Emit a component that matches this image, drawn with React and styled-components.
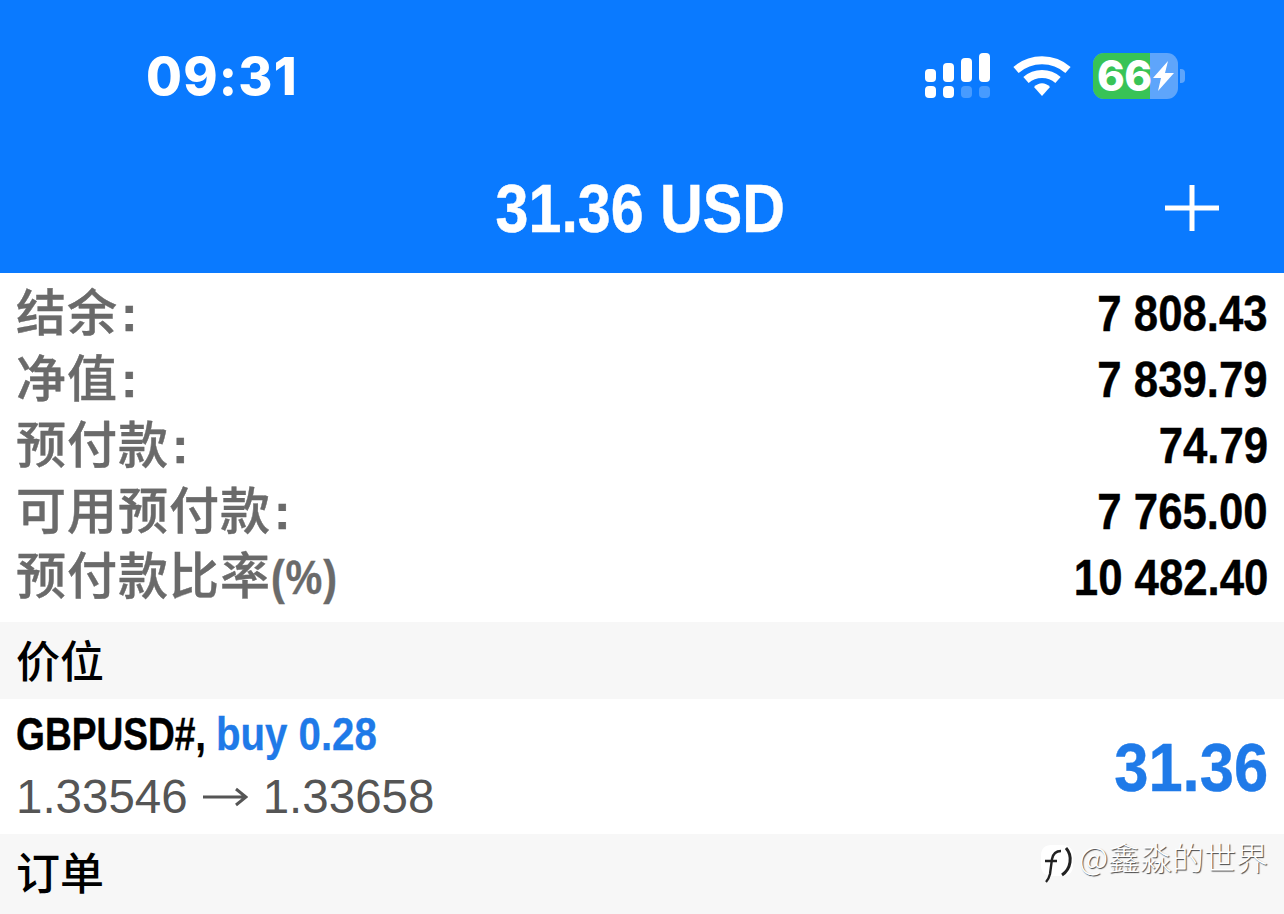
import React from 'react';
import styled, { createGlobalStyle } from 'styled-components';

const Global = createGlobalStyle`
    html, body {
        margin: 0;
        padding: 0;
        background: #fff;
    }
    body {
        font-family: "Liberation Sans", "Noto Sans CJK SC", sans-serif;
    }
`;

const Page = styled.div`
    position: relative;
    width: 1284px;
    height: 914px;
    overflow: hidden;
    display: flex;
    flex-direction: column;
`;

const Header = styled.header`
    height: 273px;
    flex: none;
    background: #0a7aff;
    color: #fff;
    display: flex;
    flex-direction: column;
`;

const StatusBar = styled.div`
    height: 150px;
    padding: 2px 99px 0 146px;
    box-sizing: border-box;
    display: flex;
    align-items: center;
    justify-content: space-between;
`;

const Clock = styled.div`
    font-family: Inter, "Liberation Sans", sans-serif;
    font-size: 52px;
    font-weight: 800;
    letter-spacing: 1.2px;
`;

const StatusIcons = styled.div`
    display: flex;
    align-items: center;
    gap: 22px;
`;

const BatteryWrap = styled.div`
    display: flex;
    align-items: center;
    gap: 2px;
`;

const Battery = styled.div`
    position: relative;
    width: 85px;
    height: 46px;
    border-radius: 11px;
    background: #5ea5fb;
    display: flex;
    align-items: center;
    padding-left: 4px;
    box-sizing: border-box;
    font-family: Inter, sans-serif;
    font-size: 42px;
    line-height: 46px;
    font-weight: 800;
`;

const BatteryFill = styled.div`
    position: absolute;
    left: 0;
    top: 0;
    bottom: 0;
    border-radius: 11px 0 0 11px;
    background: #38c356;
`;

const BatteryText = styled.span`
    position: relative;
    letter-spacing: -0.5px;
`;

const BatteryBolt = styled.svg`
    position: relative;
    flex: none;
    margin-left: 1px;
`;

const BatteryCap = styled.div`
    width: 5px;
    height: 14px;
    border-radius: 0 4px 4px 0;
    background: #5ea5fb;
`;

const TitleRow = styled.div`
    position: relative;
    height: 116px;
    display: flex;
    align-items: center;
    justify-content: center;
`;

const Title = styled.div`
    font-size: 68px;
    font-weight: 700;
    transform: scaleX(0.87);
    white-space: nowrap;
    -webkit-text-stroke: 0.5px #fff;
    margin-right: 4px;
`;

const PlusIcon = styled.svg`
    position: absolute;
    right: 65px;
    top: 35px;
`;

const Summary = styled.div`
    height: 349px;
    flex: none;
    padding-top: 8px;
    box-sizing: border-box;
`;

const SummaryRow = styled.div`
    height: 66px;
    padding: 0 16px;
    display: flex;
    align-items: center;
    justify-content: space-between;
`;

const Label = styled.span`
    font-family: "Noto Sans CJK SC", sans-serif;
    font-size: 50px;
    line-height: 60px;
    font-weight: 500;
    color: #6a6a6a;
    letter-spacing: 1px;
    margin-top: -6px;
    -webkit-text-stroke: 0.4px #6a6a6a;
`;

const Colon = styled.span`
    font-family: "Liberation Sans", sans-serif;
    font-weight: 700;
    margin-left: 3px;
`;

const Percent = styled.span`
    display: inline-block;
    font-family: "Liberation Sans", sans-serif;
    font-size: 48px;
    font-weight: 700;
    transform: scaleX(0.86);
    transform-origin: left center;
    margin-right: -10px;
`;

const Value = styled.span`
    font-size: 50px;
    font-weight: 700;
    color: #000;
    display: inline-block;
    transform: scaleX(0.875);
    transform-origin: right center;
    white-space: nowrap;
    -webkit-text-stroke: 0.4px #000;
`;

const SectionHead = styled.div`
    height: ${(p) => p.$h}px;
    flex: none;
    padding: 0 16px ${(p) => p.$pad}px;
    box-sizing: border-box;
    background: #f7f7f7;
    color: #000;
    display: flex;
    align-items: center;
    font-family: "Noto Sans CJK SC", sans-serif;
    font-size: 44px;
    font-weight: 500;
`;

const Position = styled.div`
    height: 135px;
    flex: none;
    padding: 0 16px;
    box-sizing: border-box;
    display: flex;
    align-items: center;
    justify-content: space-between;
`;

const PositionInfo = styled.div`
    display: flex;
    flex-direction: column;
    gap: 4px;
    margin-top: -4px;
`;

const SymbolLine = styled.div`
    display: flex;
    line-height: 60px;
    font-size: 47px;
    font-weight: 700;
    white-space: nowrap;
`;

const Symbol = styled.span`
    display: inline-block;
    width: 200px;
    color: #000;
    transform: scaleX(0.79);
    transform-origin: left center;
    -webkit-text-stroke: 0.4px #000;
`;

const Side = styled.span`
    display: inline-block;
    color: #1f7ae8;
    transform: scaleX(0.855);
    transform-origin: left center;
    -webkit-text-stroke: 0.3px #1f7ae8;
`;

const Prices = styled.div`
    display: flex;
    align-items: center;
    font-size: 47.5px;
    color: #555;
    line-height: 58px;
    white-space: nowrap;
`;

const Arrow = styled.svg`
    margin: 0 15px 0 14px;
`;

const Profit = styled.div`
    font-size: 68px;
    font-weight: 700;
    color: #1f7ae8;
    transform: scaleX(0.905);
    transform-origin: right center;
    -webkit-text-stroke: 0.4px #1f7ae8;
`;

const Watermark = styled.div`
    position: absolute;
    left: 1040px;
    top: 833px;
    display: flex;
    align-items: center;
    gap: 5px;
    font-family: "Noto Sans CJK SC", sans-serif;
    font-size: 32px;
    font-weight: 300;
    color: #fff;
    text-shadow: 1px 1px 1px #444;
    white-space: nowrap;
`;

const WatermarkLogo = styled.svg`
    position: relative;
    top: 8px;
`;

const summary = [
    { label: '结余', value: '7 808.43' },
    { label: '净值', value: '7 839.79' },
    { label: '预付款', value: '74.79' },
    { label: '可用预付款', value: '7 765.00' },
    { label: '预付款比率', value: '10 482.40', percent: true },
];

function SignalIcon() {
    return (
        <svg width="66" height="46" viewBox="0 0 66 46">
            <rect x="0" y="16" width="11" height="13" rx="4" fill="#fff" />
            <rect x="18" y="10" width="11" height="19" rx="4" fill="#fff" />
            <rect x="36" y="5" width="11" height="24" rx="4" fill="#fff" />
            <rect x="54" y="0" width="11" height="29" rx="4" fill="#fff" />
            <rect x="0" y="33" width="11" height="12" rx="4" fill="#fff" />
            <rect x="18" y="33" width="11" height="12" rx="4" fill="#fff" />
            <rect x="36" y="33" width="11" height="12" rx="4" fill="#fff" opacity="0.25" />
            <rect x="54" y="33" width="11" height="12" rx="4" fill="#fff" opacity="0.25" />
        </svg>
    );
}

function WifiIcon() {
    return (
        <svg width="58" height="42" viewBox="0 0 58 42" fill="none">
            <path d="M3 15 C18 2 40 2 55 15" stroke="#fff" strokeWidth="8" />
            <path d="M13 25 C22 17 36 17 45 25" stroke="#fff" strokeWidth="8" />
            <path d="M21 32 C26 27 32 27 37 32 L29 41 Z" fill="#fff" />
        </svg>
    );
}

function App() {
    return (
        <Page>
            <Global />
            <Header>
                <StatusBar>
                    <Clock>09:31</Clock>
                    <StatusIcons>
                        <SignalIcon />
                        <WifiIcon />
                        <BatteryWrap>
                            <Battery>
                                <BatteryFill style={{ width: '67%' }} />
                                <BatteryText>66</BatteryText>
                                <BatteryBolt width="21" height="30" viewBox="0 0 21 30">
                                    <path d="M15 0 L0 17 H8 L5 30 L21 12 H12 Z" fill="#fff" />
                                </BatteryBolt>
                            </Battery>
                            <BatteryCap />
                        </BatteryWrap>
                    </StatusIcons>
                </StatusBar>
                <TitleRow>
                    <Title>31.36 USD</Title>
                    <PlusIcon width="54" height="46" viewBox="0 0 54 46">
                        <path d="M27 0 V46 M0 23 H54" stroke="#fff" strokeWidth="5" />
                    </PlusIcon>
                </TitleRow>
            </Header>
            <Summary>
                {summary.map((row) => (
                    <SummaryRow key={row.label}>
                        <Label>
                            {row.label}
                            {row.percent ? <Percent>(%)</Percent> : <Colon>:</Colon>}
                        </Label>
                        <Value>{row.value}</Value>
                    </SummaryRow>
                ))}
            </Summary>
            <SectionHead $h={77} $pad={4}>价位</SectionHead>
            <Position>
                <PositionInfo>
                    <SymbolLine>
                        <Symbol>GBPUSD#,</Symbol>
                        <Side>buy 0.28</Side>
                    </SymbolLine>
                    <Prices>
                        1.33546
                        <Arrow width="46" height="24" viewBox="0 0 46 24" fill="none">
                            <path d="M1 12 H44 M34 4 L44 12 L34 20" stroke="#555" strokeWidth="3" />
                        </Arrow>
                        1.33658
                    </Prices>
                </PositionInfo>
                <Profit>31.36</Profit>
            </Position>
            <SectionHead $h={80} $pad={6}>订单</SectionHead>
            <Watermark>
                <WatermarkLogo width="34" height="40" viewBox="0 0 34 40" fill="none">
                    <path d="M1 11 C1 5 5 1 11 1 H23 C29 1 33 5 33 11 V22 C33 28 29 32 23 32 H11 C5 32 1 28 1 22 Z" fill="#fff" />
                    <path d="M21 7 C15 7 13 10 12 15 L10 30 C9 34 8 36 6 38 M5 17 H17" stroke="#222" strokeWidth="2.4" />
                    <path d="M26 4 C33 12 31 25 22 31" stroke="#222" strokeWidth="3" />
                </WatermarkLogo>
                <span>@鑫淼的世界</span>
            </Watermark>
        </Page>
    );
}

export default App;
